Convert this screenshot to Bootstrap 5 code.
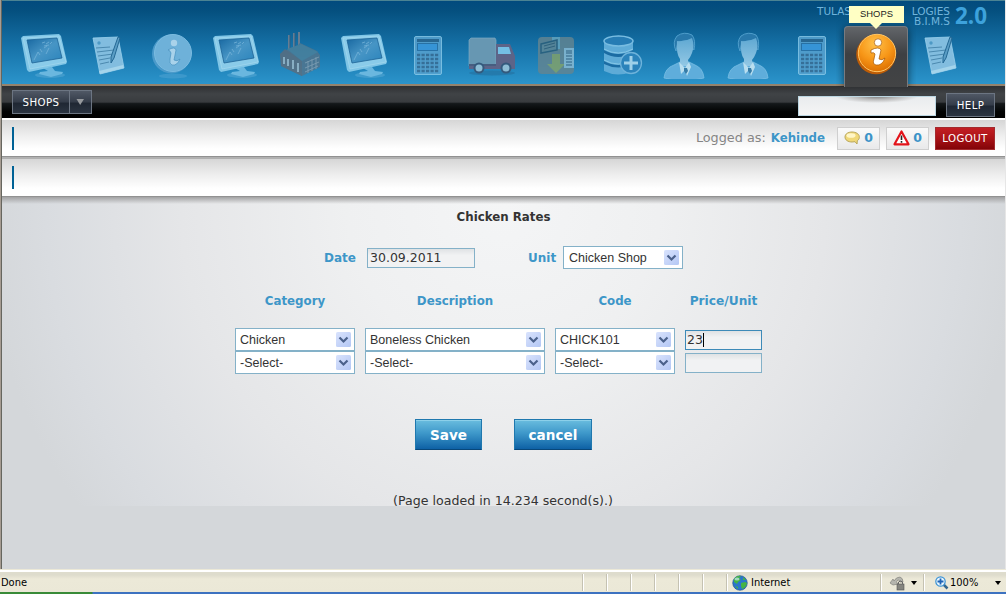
<!DOCTYPE html>
<html lang="en">
<head>
<meta charset="utf-8">
<meta name="viewport" content="width=device-width, initial-scale=1">
<title>B.I.M.S 2.0</title>
<link href="https://cdn.jsdelivr.net/npm/bootstrap@5.3.0/dist/css/bootstrap.min.css" rel="stylesheet">
<style>
body{font-family:"DejaVu Sans",sans-serif;font-size:12px;line-height:16px;color:#333;height:594px;overflow:hidden;background:#d4d7da}
.page-frame{height:569px;border-left:1px solid #a69c92;border-right:1px solid #e6e6e6;box-shadow:inset 1px 0 #66665f;padding-left:1px}
.top-banner{height:86px;border-top:1px solid #4b8393;border-bottom:2px solid #94836d;background:linear-gradient(#024b7e 0,#05507f 12%,#1672a8 55%,#2b94cb 100%)}
.icon-strip{padding:25px 0 0 10px;height:85px}
.icon-cell{width:64px;height:60px;padding-top:5px;flex:none}
.icon-cell svg{display:block;margin:0 auto;width:48px;height:48px}
.soft svg{opacity:.82}
.tab-on{background:linear-gradient(#626569,#3e4043 45%,#434445);border:1px solid #777b80;border-bottom:0;border-radius:4px 4px 0 0;box-shadow:0 2px 9px rgba(0,0,0,.6);height:61px;padding-top:4px;clip-path:inset(-8px -8px 0 -8px)}
.tip{top:-20px;left:5px;width:55px;height:17px;background:#ffffc4;font:9.4px/16px "Liberation Sans",sans-serif;text-align:center;color:#222;z-index:3}
.tip:after{content:"";position:absolute;left:21px;top:17px;border:6px solid transparent;border-top-color:#ffffc4;border-bottom:0}
.brand{top:5px;right:19px;color:#70b4dc;text-align:right;font-size:10.5px;line-height:10px}
.brand-l{white-space:nowrap}
.brand-v{font:bold 22.500px/20px "Open Sans",sans-serif;color:#3da2dc;width:31px;margin-left:5px}
.menu-bar{height:32px;background:linear-gradient(#2e3032 0,#404346 25%,#393c3f 50%,#14181a 55%,#020303 80%,#000);padding:4px 10px 0}
.dark-btn{font-size:10.2px;letter-spacing:.4px;line-height:16px;color:#fff;border:1px solid #6c7582;border-radius:0;padding:1px 0 0;background:linear-gradient(#505865,#343c49 50%,#1f2733 55%,#2b3441)}
.dark-btn:hover{color:#fff}
.search-box{width:138px;height:20px;margin:6px 10px 0 0;border:1px solid #bcd6e2;border-radius:0;background:radial-gradient(ellipse 42px 7px at 78px -1px,#777 0,#bbb 50%,transparent 100%),linear-gradient(#e9ecee,#f5f5f5)}
.strip{border-top:2px solid #fff;background:linear-gradient(#d6d6d6,#efefef 45%,#fff 80%);border-bottom:1px solid #929292}
.mark-bar{width:2px;height:23px;margin-left:10px;background:#006296}
.count-box{height:23px;border:1px solid #cfcfcf;background:linear-gradient(#fafafa,#e9e9ea);color:#3b93c8;font-weight:bold;font-size:12.5px;padding:0 6px}
.logout{width:60px;height:23px;background:linear-gradient(#c31f24,#a91216 50%,#830408);border:1px solid #a32b2e;color:#fff;font-size:10.2px;letter-spacing:.4px;border-radius:0;padding:2px 0 0;line-height:16px}
.work{height:372px;background:linear-gradient(#a2a2a3,rgba(200,200,200,0) 7px),radial-gradient(ellipse 520px 520px at 50% 10px,#f4f5f6 0,#eff0f1 30%,#e5e6e8 62%,#d9dce0 88%,#d4d7da 100%) 0 0/100% 309px no-repeat,#d4d7da}
.blue-t{color:#3d96c8;font-weight:bold}
.col-head{font-size:11.8px}
.drop,.fld{border:1px solid #84b1c8;border-radius:0;color:#333}
.drop{appearance:none;height:23px;width:100%;padding:0 0 0 4px;font:12.5px/20px "Liberation Sans",sans-serif;background:#fff;display:block}
.fld{padding:0 0 1px 2px;font-size:12.5px;line-height:16px;height:20px;background:linear-gradient(#dfe2e4,#f1f2f3 35%,#f1f2f3)}
.drop-arrow{right:4px;top:4px;width:15px;height:15px;pointer-events:none}
.act{height:31px;font:bold 13.6px/31px "DejaVu Sans",sans-serif;color:#fff;border:1px solid #1f78ae;border-bottom-color:#08477a;border-radius:0;padding:0;background:linear-gradient(#6abddf,#3e98ca 45%,#0e61a5);box-shadow:inset 0 1px #8cd0ea}
.status{height:25px;border-top:1px solid #888a80;box-shadow:inset 0 2px #fff;background:linear-gradient(#dedccd 0,#dedccd 5px,#ece9d8 9px,#ebe8d7);font:11px/24px "DejaVu Sans Condensed","DejaVu Sans",sans-serif;color:#000;border-bottom:2px solid #3d72c0;border-image:linear-gradient(90deg,#398b38 92px,#3d72c0 93px) 0 0 2 0;padding-top:1px}
.sep{width:24px;border-left:1px solid #c5c2b2;box-shadow:inset 1px 0 #fff;margin:3px 0 1px;flex:none}
.tri{border:3px solid transparent;border-top:4px solid #000;border-bottom:0}
</style>
</head>
<body>
<svg width="0" height="0" class="position-absolute">
<defs>
<linearGradient id="scr" x1="0" y1="0" x2="1" y2="1"><stop stop-color="#1767a0"/><stop offset=".5" stop-color="#4795c5"/><stop offset="1" stop-color="#2a84bc"/></linearGradient>
<linearGradient id="skin" x1="0" y1="0" x2="0" y2="1"><stop stop-color="#5fa8d2"/><stop offset="1" stop-color="#93c8e5"/></linearGradient>
<radialGradient id="gold" cx=".45" cy=".25" r=".8"><stop stop-color="#ffc14a"/><stop offset=".55" stop-color="#f79617"/><stop offset="1" stop-color="#d96b00"/></radialGradient>
<symbol id="i-pc" viewBox="0 0 48 48">
<ellipse cx="30" cy="44" rx="15" ry="3" fill="#55a7d4" opacity=".55"/>
<path d="M23 37 32 36 35 40 43 41 42 43 31 46 19 43 20 41 28 40Z" fill="#6ab7df"/>
<path d="M1 7 3 5 39 3 41 5 47 31 46 33 9 41 7 39Z" fill="#7fc5e6"/>
<path d="M3 7 39 5 46 31 10 38Z" fill="#8acbe9" stroke="#a5d9ee" stroke-width=".7"/>
<path d="M7 9 37 7 42 27 12 32Z" fill="url(#scr)" stroke="#1e6396" stroke-width=".8"/>
<path d="m14 29 4-8 2 3m0-6 2 3m2-4 3-2m-1 8 3-6M22 12l3-1m1 2 3-2m1 2 2-2m-8 4 5-1" fill="none" stroke="#77b4da" stroke-width="1" opacity=".75"/>
</symbol>
<symbol id="i-note" viewBox="0 0 48 48">
<path d="M9 7 34 6 40 37 16 43Z" fill="#82bddf" stroke="#9bd1ec" stroke-width=".8"/>
<path d="m16 43 24-6-1-3-24 6Z" fill="#a4d4eb"/>
<path d="m12 17 14-1m-13 5 17-2m-16 6 15-2m-14 6 11-2m-10 6 9-2" stroke="#4b89af" stroke-width="1" fill="none"/><circle cx="15" cy="12" r="1.7" fill="#4d99c5"/>
<path d="m34 6 2 1-6 20-3 5v-6Z" fill="#5a9dc5" stroke="#246894" stroke-width="1"/>
</symbol>
<symbol id="i-info" viewBox="0 0 48 48">
<ellipse cx="25" cy="45" rx="14" ry="2.5" fill="#4ba0d0" opacity=".6"/>
<circle cx="23.5" cy="23" r="19.5" fill="#4b9aca"/><circle cx="25" cy="22" r="18.5" fill="#6eb1d9" stroke="#7bbce1"/>
<circle cx="26" cy="12" r="3.2" fill="#a9d2ea"/><path d="M20 19q7-4 8 0l-2 10q3 2 6-1-3 7-8 6-3-1-2-6l1-6q-1-3-3-3Z" fill="#a9d2ea" stroke="#3e8abb" stroke-width=".6"/>
</symbol>
<symbol id="i-calc" viewBox="0 0 48 48">
<rect x="10.500" y="5.500" width="27" height="38" rx="1.500" fill="#5ba5d2" stroke="#8ccbea"/>
<rect x="13" y="8" width="22" height="3" fill="#2c668e"/><rect x="13.500" y="12.500" width="20" height="7" fill="#3e9ce0" stroke="#2c72a5"/>
<path d="M13 24h22M13 28h22M13 32h22M13 36h22M13 40h22" stroke="#3b6c92" stroke-width="2.600" stroke-dasharray="3.200 1.300"/>
</symbol>
<symbol id="i-user" viewBox="0 0 48 48">
<path d="M4 47Q5 37 14 34L20 31H29L35 34Q43 37 44 47Q24 52 4 47Z" fill="#5faddb" stroke="#79bee3" stroke-width=".8"/>
<path d="M16 20Q12 11 17 5Q24 0 32 4Q36 9 34 19L31 15V9L18 11Z" fill="#2878ab" stroke="#5ba8d4" stroke-width=".8"/>
<path d="M17 10Q25 11 32 7Q35 15 32 22Q30 27 28 29L29 35H20V28Q16 23 17 10Z" fill="url(#skin)"/>
<path d="m19 31 6 6 4-6 2 5-4 9-2-6-4 4Z" fill="#b9deef"/><path d="m24 37 3 0 1 3-2 3-2-3Z" fill="#377ca7"/>
</symbol>
<linearGradient id="ag" x1="0" y1="0" x2="1" y2="1"><stop stop-color="#d9e3fd"/><stop offset="1" stop-color="#b4c7f4"/></linearGradient>
<symbol id="arrow" viewBox="0 0 15 15"><rect width="15" height="15" rx="1.500" fill="url(#ag)"/><path d="m3.500 5.500 4 4 4-4" fill="none" stroke="#4b618b" stroke-width="2.200"/></symbol>
</defs></svg>

<div class="page-frame">
<header class="top-banner position-relative">
 <div class="brand position-absolute d-flex"><div class="brand-l"><div class="d-flex justify-content-between" style="width:133px"><span>TULAS</span><span>LOGIES</span></div>B.I.M.S</div><div class="brand-v">2.0</div></div>
 <nav class="icon-strip d-flex position-relative">
  <div class="icon-cell"><svg><use href="#i-pc"/></svg></div>
  <div class="icon-cell"><svg><use href="#i-note"/></svg></div>
  <div class="icon-cell"><svg><use href="#i-info"/></svg></div>
  <div class="icon-cell"><svg><use href="#i-pc"/></svg></div>
  <div class="icon-cell soft"><svg viewBox="0 0 48 48">
   <path d="M13 20V4M18 19V2M23 18V1" stroke="#7a8290" stroke-width="2"/><path d="M14 20V4M19 19V2" stroke="#335f80" stroke-width="1"/>
   <path d="M4 23 14 17 18 19 24 12 41 20 44 24V36L26 45 5 35Z" fill="#52748c"/>
   <path d="m4 23 5-5 17 12v15L5 35Z" fill="#5c6d7d"/><path d="m11 18 14-5 17 8-16 9Z" fill="#4c819b"/>
   <path d="M8 26v7m4-5v7m5-6v9m5-6v9" stroke="#9fb8c6" stroke-width="2"/><path d="m29 32 14-6m-14 11 14-6m-14 10 13-6m-10-5v12m4-14v12m4-14v12" stroke="#8ea2b0" stroke-width=".9"/></svg></div>
  <div class="icon-cell"><svg><use href="#i-pc"/></svg></div>
  <div class="icon-cell soft"><svg><use href="#i-calc"/></svg></div>
  <div class="icon-cell"><svg viewBox="0 0 48 48">
   <ellipse cx="24" cy="42" rx="23" ry="2.500" fill="#256f9e" opacity=".6"/>
   <path d="M1 9 3 7H27L28 9V35H1Z" fill="#6797b2" stroke="#7caac3" stroke-width=".7"/>
   <path d="M28 13H42L47 25V38H1V33H28Z" fill="#5d6488"/><path d="M30 16H41L43 23H30Z" fill="#74bfe4"/><path d="M1 34H28" stroke="#475e80" stroke-width="2"/>
   <circle cx="11" cy="37" r="5.500" fill="#345a7d"/><circle cx="11" cy="37" r="3.500" fill="#8ebdd5"/><circle cx="38" cy="37" r="5.500" fill="#345a7d"/><circle cx="38" cy="37" r="3.500" fill="#8ebdd5"/></svg></div>
  <div class="icon-cell soft"><svg viewBox="0 0 48 48">
   <rect x="6" y="6" width="36" height="37" rx="4" fill="#648591"/><path d="M20 6h8v12h-8Z" fill="#69a7bf"/>
   <path d="m9 13 16-4v10L9 22Z" fill="#628895" stroke="#2c5e78" stroke-width="1.500"/><path d="m12 15 11-3m-11 6 11-3" stroke="#345e73"/>
   <path d="M20 23h8v10h5l-9 9-9-9h5Z" fill="#86a368"/>
   <rect x="32" y="17" width="10" height="20" fill="#8ebdd4"/><path d="M34 20h6m-6 2h6m-6 3h6m-6 3h6m-6 3h6m-6 3h6" stroke="#315a76" stroke-width="1.200"/></svg></div>
  <div class="icon-cell"><svg viewBox="0 0 48 48">
   <path d="M8 10V40Q22 47 37 40V10Z" fill="#5eabd7"/><ellipse cx="22.500" cy="10" rx="14.500" ry="5" fill="#267cb4" stroke="#78bce1" stroke-width="1.500"/>
   <path d="M8 19Q22 27 37 19V22Q22 30 8 22ZM8 30Q22 38 37 30V33Q22 40 8 33Z" fill="#1b6ca3"/><path d="M8 18Q22 26 37 18M8 29Q22 37 37 29" fill="none" stroke="#85c7e7"/>
   <circle cx="35" cy="32" r="10.500" fill="#2b83bb" stroke="#6eb3db" stroke-width="1.300"/><path d="M35 25v14m-7-7h14" stroke="#9ed0e9" stroke-width="3"/></svg></div>
  <div class="icon-cell"><svg><use href="#i-user"/></svg></div>
  <div class="icon-cell"><svg><use href="#i-user"/></svg></div>
  <div class="icon-cell soft"><svg><use href="#i-calc"/></svg></div>
  <div class="position-relative">
   <div class="icon-cell tab-on"><svg viewBox="0 0 48 48">
    <circle cx="24" cy="23.500" r="19.800" fill="#bd5c06"/><circle cx="25" cy="22" r="18.700" fill="url(#gold)" stroke="#ffc565" stroke-width="1"/>
    <circle cx="26" cy="11.500" r="3.700" fill="#fff" stroke="#a35405" stroke-width=".7"/><path d="M19 19q8-4 10 0l-2 9q3 2 6-1-3 8-9 7-4-1-2-6l1-5q-1-2-4-1Z" fill="#fff" stroke="#a35405" stroke-width=".7"/></svg></div>
   <div class="tip position-absolute">SHOPS</div>
  </div>
  <div class="icon-cell"><svg><use href="#i-note"/></svg></div>
 </nav>
</header>

<div class="menu-bar d-flex align-items-start">
 <div class="btn-group"><button class="btn dark-btn" style="width:58px;height:24px">SHOPS</button><button class="btn dark-btn d-flex align-items-center justify-content-center" style="width:23px;height:24px"><svg width="9" height="7"><path d="M.500 0h7.500L4.200 6Z" fill="#96999d"/></svg></button></div>
 <input class="search-box ms-auto" aria-label="Search">
 <button class="btn dark-btn" style="width:49px;height:24px;margin-top:3px">HELP</button>
</div>

<div class="strip d-flex align-items-center" style="height:39px">
 <div class="mark-bar"></div>
 <div class="ms-auto d-flex align-items-center" style="padding-right:10px">
  <span style="font-size:12.8px;color:#858585">Logged as:</span><span class="blue-t" style="margin-left:5px;font-size:11.8px">Kehinde</span>
  <div class="count-box d-flex align-items-center justify-content-between" style="width:43px;margin-left:12px"><svg width="16" height="14" viewBox="0 0 16 14"><path d="M8 1C4 1 1 3 1 6s3 5 7 5l3-.300 2 2.300.300-3.300C15 8.800 15.500 7 15.300 5.500 15 3 12 1 8 1Z" fill="#f0d878" stroke="#b9a75d"/><ellipse cx="7" cy="4.500" rx="4.500" ry="2.300" fill="#fff6c7"/></svg>0</div>
  <div class="count-box d-flex align-items-center justify-content-between" style="width:43px;margin-left:6px"><svg width="17" height="16" viewBox="0 0 17 16"><path d="M8.500 1.500 15.500 14.300H1.500Z" fill="#fff" stroke="#e3141b" stroke-width="2.200" stroke-linejoin="round"/><path d="M8.500 5.500v4.500m0 1v1.700" stroke="#222" stroke-width="1.600"/></svg>0</div>
  <button class="btn logout" style="margin-left:6px">LOGOUT</button>
 </div>
</div>
<div class="strip d-flex align-items-center" style="height:40px;border-top:2px solid #b1b1b1"><div class="mark-bar"></div></div>

<main class="work">
 <div class="text-center fw-bold" style="padding:12px 0 0 0;font-size:11.8px">Chicken Rates</div>
 <div class="d-flex align-items-center" style="margin:21px 0 0 322px;height:23px">
  <label class="blue-t" style="width:43px">Date</label><input class="fld" style="width:108px" value="30.09.2011">
  <label class="blue-t" style="margin-left:53px;width:35px">Unit</label>
  <div class="position-relative" style="width:120px"><select class="drop" style="padding-left:5px"><option>Chicken Shop</option></select><svg class="drop-arrow position-absolute"><use href="#arrow"/></svg></div>
 </div>
 <div class="d-flex text-center blue-t col-head" style="margin:24px 0 0 233px;gap:10px"><div style="width:120px">Category</div><div style="width:180px">Description</div><div style="width:120px">Code</div><div style="width:77px;font-size:12.200px">Price/Unit</div></div>
 <div class="d-flex" style="margin:19px 0 0 233px;gap:10px">
  <div style="width:120px"><div class="position-relative"><select class="drop"><option>Chicken</option></select><svg class="drop-arrow position-absolute"><use href="#arrow"/></svg></div><div class="position-relative"><select class="drop"><option>-Select-</option></select><svg class="drop-arrow position-absolute"><use href="#arrow"/></svg></div></div>
  <div style="width:180px"><div class="position-relative"><select class="drop"><option>Boneless Chicken</option></select><svg class="drop-arrow position-absolute"><use href="#arrow"/></svg></div><div class="position-relative"><select class="drop"><option>-Select-</option></select><svg class="drop-arrow position-absolute"><use href="#arrow"/></svg></div></div>
  <div style="width:120px"><div class="position-relative"><select class="drop"><option>CHICK101</option></select><svg class="drop-arrow position-absolute"><use href="#arrow"/></svg></div><div class="position-relative"><select class="drop"><option>-Select-</option></select><svg class="drop-arrow position-absolute"><use href="#arrow"/></svg></div></div>
  <div class="d-flex flex-column" style="width:77px;gap:3px;padding-top:2px"><div class="fld d-flex align-items-center" style="border-color:#3d8ab8;padding-left:1px">23<span style="width:1px;height:14px;background:#000"></span></div><input class="fld w-100" aria-label="Price"></div>
 </div>
 <div class="d-flex" style="margin:45px 0 0 413px;gap:32px"><button class="btn act" style="width:67px">Save</button><button class="btn act" style="width:78px">cancel</button></div>
 <div class="text-center" style="font-size:12.6px;margin-top:43px;padding-right:1px">(Page loaded in 14.234 second(s).)</div>
</main>
</div>

<footer class="status d-flex">
 <div style="width:582px;padding-left:1px">Done</div>
 <div class="sep"></div><div class="sep"></div><div class="sep"></div><div class="sep"></div><div class="sep"></div><div class="sep"></div>
 <div class="sep d-flex align-items-center" style="width:154px;padding-left:5px"><svg width="16" height="16" viewBox="0 0 16 16" style="margin-right:3px"><circle cx="8" cy="8" r="7.300" fill="#2b76cc" stroke="#1e508c" stroke-width=".6"/><path d="M2 4Q5 0 9 1L7 3 9 5 6 7 5 9 2 7ZM9 8l4-1 2 1q-1 5-5 6l-1-3ZM11 2l3 3-3 0ZM3 11l3 1v2Z" fill="#46b443"/><ellipse cx="5" cy="4" rx="2.500" ry="1.600" fill="#cfedff" opacity=".65"/></svg>Internet</div>
 <div class="sep d-flex align-items-center" style="width:43px;padding-left:8px"><svg width="17" height="16" viewBox="0 0 17 16"><path d="M1 8 4 4l1 2q2-4 6-4 3 1 3 5l-3 0q0-2-2-2-2 1-1 3l1 1-5 1Z" fill="#b5b5ae" stroke="#84847e" stroke-width=".7"/><rect x="8" y="9" width="7" height="6" fill="#85857f" stroke="#555" stroke-width=".6"/><path d="M9.500 9V7q2-2 4 0v2" fill="none" stroke="#666"/></svg><span class="tri" style="margin-left:5px"></span></div>
 <div class="sep d-flex align-items-center" style="width:82px;padding-left:11px"><svg width="14" height="14" viewBox="0 0 14 14"><path d="m8.500 8.500 4 4" stroke="#34678f" stroke-width="2.500"/><circle cx="5.500" cy="5.500" r="4.700" fill="#e9f7ff" stroke="#3b92d4" stroke-width="1.200"/><path d="M5.500 2.500v6m-3-3h6" stroke="#1d62b5" stroke-width="1.800"/></svg><span style="width:43px;padding-left:1px">100%</span><span class="tri" style="margin-left:3px"></span></div>
</footer>
<script src="https://cdn.jsdelivr.net/npm/bootstrap@5.3.0/dist/js/bootstrap.bundle.min.js"></script>
</body>
</html>
